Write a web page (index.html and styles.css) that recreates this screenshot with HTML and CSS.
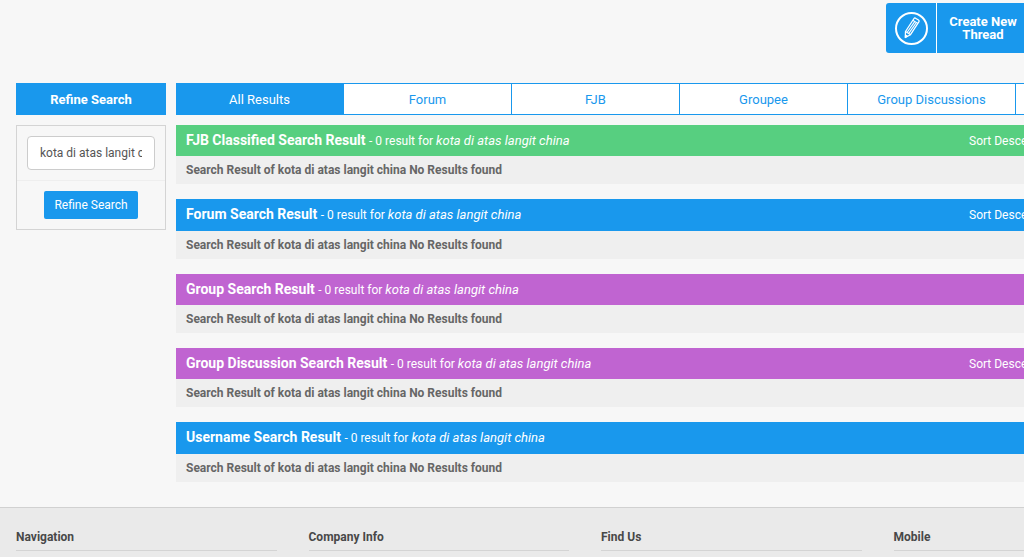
FILE: index.html
```html
<!DOCTYPE html>
<html lang="en">
<head>
<meta charset="utf-8">
<title>Search Result</title>
<link rel="stylesheet" href="styles.css">
</head>
<body>
<div class="page">
  <header class="topbar">
    <a class="create" href="#">
      <span class="create-icon">
        <svg width="34" height="34" viewBox="0 0 34 34" fill="none" stroke="#fff" aria-hidden="true">
          <circle cx="17.500" cy="17.500" r="15.500" stroke-width="2"/>
          <path d="M11.500 20.500 20 7.500Q20.500 6.700 21.500 7.200L24.500 9Q25.500 9.700 25 10.700L16.500 23.700 11.300 26.500Z" stroke-width="1.300" stroke-linejoin="round"/>
          <path d="M18.800 9.300 23.900 12.400M13.200 21.300 20.700 10.600M14.800 22.400 22.400 11.500M11.500 20.500 16.500 23.700" stroke-width="1.100"/>
          <path d="M11.500 23.800 13.700 25.200 11.300 26.500Z" fill="#fff"/>
        </svg>
      </span>
      <span class="create-text">Create New Thread</span>
    </a>
  </header>

  <div class="columns">
    <aside class="sidebar">
      <h2 class="sidebar-title">Refine Search</h2>
      <form class="refine">
        <div class="refine-field"><input class="refine-input" type="text" aria-label="Search keywords" value="kota di atas langit china"></div>
        <div class="refine-actions"><button class="refine-button" type="button">Refine Search</button></div>
      </form>
    </aside>

    <main class="content">
      <nav class="tabs">
        <a class="tab tab-active" href="#">All Results</a>
        <a class="tab" href="#">Forum</a>
        <a class="tab" href="#">FJB</a>
        <a class="tab" href="#">Groupee</a>
        <a class="tab" href="#">Group Discussions</a>
        <a class="tab" href="#">Username</a>
      </nav>

      <section class="result">
        <div class="result-head green">
          <h3 class="result-title">FJB Classified Search Result <small class="result-count">- 0 result for <em>kota di atas langit china</em></small></h3>
          <button class="sort" type="button">Sort Descending</button>
        </div>
        <p class="result-body">Search Result of kota di atas langit china No Results found</p>
      </section>
      <section class="result">
        <div class="result-head blue">
          <h3 class="result-title">Forum Search Result <small class="result-count">- 0 result for <em>kota di atas langit china</em></small></h3>
          <button class="sort" type="button">Sort Descending</button>
        </div>
        <p class="result-body">Search Result of kota di atas langit china No Results found</p>
      </section>
      <section class="result">
        <div class="result-head purple">
          <h3 class="result-title">Group Search Result <small class="result-count">- 0 result for <em>kota di atas langit china</em></small></h3>
        </div>
        <p class="result-body">Search Result of kota di atas langit china No Results found</p>
      </section>
      <section class="result">
        <div class="result-head purple">
          <h3 class="result-title">Group Discussion Search Result <small class="result-count">- 0 result for <em>kota di atas langit china</em></small></h3>
          <button class="sort" type="button">Sort Descending</button>
        </div>
        <p class="result-body">Search Result of kota di atas langit china No Results found</p>
      </section>
      <section class="result">
        <div class="result-head blue">
          <h3 class="result-title">Username Search Result <small class="result-count">- 0 result for <em>kota di atas langit china</em></small></h3>
        </div>
        <p class="result-body">Search Result of kota di atas langit china No Results found</p>
      </section>
    </main>
  </div>

  <footer class="footer">
    <h4 class="footer-title">Navigation</h4>
    <h4 class="footer-title">Company Info</h4>
    <h4 class="footer-title">Find Us</h4>
    <h4 class="footer-title">Mobile</h4>
  </footer>
</div>
</body>
</html>
```
FILE: styles.css
```css
* { box-sizing: border-box; }
html { overflow: hidden; }
body {
  margin: 0;
  background: #f7f7f7;
  color: #484848;
  font: 12px/16px Roboto, "Liberation Sans", sans-serif;
}
h2, h3, h4, p { margin: 0; }
a { text-decoration: none; }
button, input { font: inherit; }
.page { min-width: 1200px; }

.topbar { display: flex; justify-content: flex-end; padding: 3px 16px 30px; }
.create {
  display: flex;
  width: 298px;
  height: 50px;
  background: #1998ed;
  border-radius: 3px;
  color: #fff;
}
.create-icon {
  display: flex;
  align-items: center;
  justify-content: center;
  width: 51px;
  border-right: 1px solid #fff;
}
.create-text {
  align-self: center;
  width: 92px;
  text-align: center;
  font-size: 13px;
  line-height: 13px;
  font-weight: 700;
}

.columns { display: flex; gap: 10px; padding: 0 16px 25px; }
.sidebar { flex: none; width: 150px; }
.sidebar-title {
  padding: 9px 0 7px;
  background: #1998ed;
  color: #fff;
  text-align: center;
  font-size: 13px;
  line-height: 16px;
  font-weight: 700;
}
.refine { margin-top: 10px; border: 1px solid #d4d4d4; }
.refine-field { padding: 10px; border-bottom: 1px solid #eee; }
.refine-input {
  display: block;
  width: 100%;
  height: 34px;
  padding: 0 12px;
  border: 1px solid #ccc;
  border-radius: 4px;
  background: #fff;
  color: #555;
}
.refine-actions { padding: 10px; text-align: center; }
.refine-button {
  display: inline-block;
  vertical-align: top;
  padding: 6px 10px;
  border: 0;
  border-radius: 2px;
  background: #1998ed;
  color: #fff;
}

.content { flex: 1; min-width: 0; }
.tabs {
  display: flex;
  margin-bottom: 10px;
  border: 1px solid #1998ed;
  border-left: 0;
  background: #fff;
}
.tab {
  flex: 1;
  padding: 8px 0 6px;
  border-right: 1px solid #1998ed;
  color: #1998ed;
  text-align: center;
  font-size: 13px;
}
.tab:last-child { border-right: 0; }
.tab-active { background: #1998ed; color: #fff; }

.result { margin-bottom: 15px; }
.result:last-child { margin-bottom: 0; }
.result-head {
  display: flex;
  align-items: center;
  justify-content: space-between;
  padding: 7px 10px;
  color: #fff;
}
.result-title { font-size: 14px; line-height: 1.24; font-weight: 700; }
.result-count { font-size: 12px; line-height: 1; font-weight: 400; }
.result-count em { font-size: 13px; }
.sort {
  width: 205px;
  padding: 0;
  border: 0;
  background: none;
  color: #fff;
  text-align: left;
}
.green { background: #57cf80; }
.blue { background: #1998ed; }
.purple { background: #c064d1; }
.result-body {
  padding: 6px 10px;
  background: #efefef;
  color: #666;
  font-weight: 700;
}

.footer {
  display: grid;
  grid-template-columns: repeat(4, 1fr);
  gap: 32px;
  padding: 21px 46px 20px 16px;
  border-top: 1px solid #d1d1d1;
  background: #eaeaea;
}
.footer-title {
  padding-bottom: 5px;
  border-bottom: 1px solid #d4d4d4;
  font-size: 12px;
  font-weight: 700;
}
```
